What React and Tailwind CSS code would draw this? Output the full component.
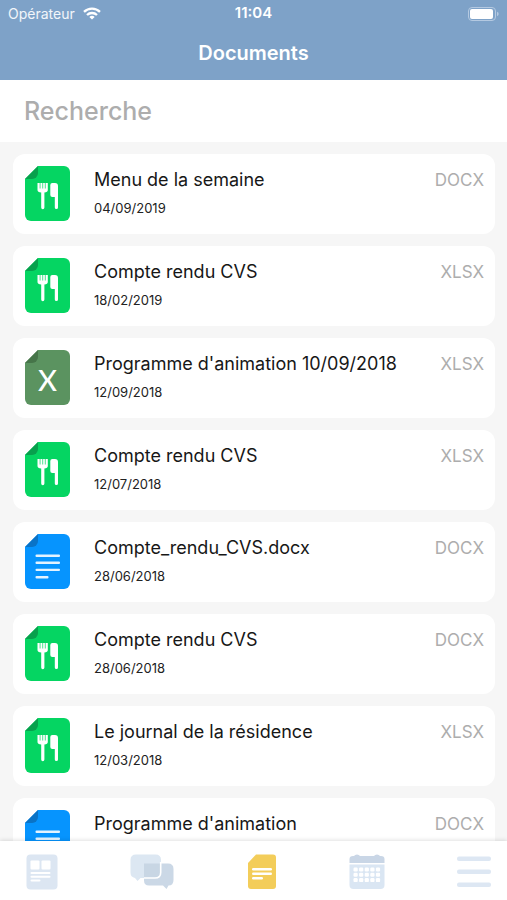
import { useState } from "react";

const documents = [
  { id: 1, title: "Menu de la semaine", date: "04/09/2019", type: "DOCX", icon: "menu" },
  { id: 2, title: "Compte rendu CVS", date: "18/02/2019", type: "XLSX", icon: "menu" },
  { id: 3, title: "Programme d'animation 10/09/2018", date: "12/09/2018", type: "XLSX", icon: "sheet" },
  { id: 4, title: "Compte rendu CVS", date: "12/07/2018", type: "XLSX", icon: "menu" },
  { id: 5, title: "Compte_rendu_CVS.docx", date: "28/06/2018", type: "DOCX", icon: "text" },
  { id: 6, title: "Compte rendu CVS", date: "28/06/2018", type: "DOCX", icon: "menu" },
  { id: 7, title: "Le journal de la résidence", date: "12/03/2018", type: "XLSX", icon: "menu" },
  { id: 8, title: "Programme d'animation", type: "DOCX", icon: "text" },
];

const iconColors = {
  menu: { page: "#05d562", fold: "#08a04d" },
  sheet: { page: "#5b9360", fold: "#467549" },
  text: { page: "#0694fe", fold: "#0a73c6" },
};

const DocumentIcon = ({ kind }) => {
  const { page, fold } = iconColors[kind];

  return (
    <svg width="45" height="55" viewBox="0 0 45 55" className="shrink-0" aria-hidden="true">
      <path d="M13 0H39a6 6 0 0 1 6 6V49a6 6 0 0 1-6 6H6a6 6 0 0 1-6-6V13Z" fill={page} />
      <path d="M13 0V7a6 6 0 0 1-6 6H0Z" fill={fold} />

      {kind === "menu" && (
        <g fill="#fff">
          {/* Fork */}
          <path d="M12.500 17H22.800V24q0 2.300-3.400 2.600V41.600a1.600 1.600 0 0 1-3.200 0V26.600q-3.700-.3-3.700-2.600Z" />
          <path d="M15.100 17v5.500M17.700 17v5.500M20.300 17v5.500" fill="none" stroke={page} strokeWidth="0.700" />
          {/* Knife */}
          <path d="M25.300 19Q25.300 17 27.300 17H30Q33 17 33 20V41.500a1.600 1.600 0 0 1-3.200 0V31h-2.500Q25.300 31 25.300 29Z" />
        </g>
      )}

      {kind === "sheet" && (
        <text x="22.500" y="41" textAnchor="middle" fontSize="29" fontWeight="500" fontFamily="Lato, sans-serif" fill="#fff">
          X
        </text>
      )}

      {kind === "text" && (
        <g fill="#e3f3ff">
          <rect x="10.500" y="20.500" width="24.500" height="2.400" rx="1" />
          <rect x="10.500" y="27.500" width="24.500" height="2.400" rx="1" />
          <rect x="10.500" y="34.700" width="24.500" height="2.400" rx="1" />
          <rect x="10.500" y="42" width="13" height="2.400" rx="1" />
        </g>
      )}
    </svg>
  );
};

const StatusBar = () => (
  <div className="flex h-[27px] items-center px-2 text-[14px] text-white">
    <div className="flex flex-1 items-center gap-2">
      <span className="text-white/90">Opérateur</span>
      <svg width="18" height="13" viewBox="0 0 18 13" fill="none" stroke="#fff" strokeWidth="2.300" aria-hidden="true">
        <path d="M1 4.800a11.500 11.500 0 0 1 16 0" />
        <path d="M4 8a7.300 7.300 0 0 1 10 0" />
        <path d="M9 12.600 6.300 9.900a4 4 0 0 1 5.400 0Z" fill="#fff" stroke="none" />
      </svg>
    </div>
    <span className="text-[15px] font-semibold">11:04</span>
    <div className="flex flex-1 justify-end">
      <svg width="31" height="14" viewBox="0 0 31 14" aria-hidden="true">
        <rect x="0.500" y="0.500" width="27" height="13" rx="3.500" fill="none" stroke="#b4c9e1" />
        <rect x="2" y="2" width="23" height="10" rx="2" fill="#fff" />
        <path d="M29 4.800q1.700.6 1.700 2.200T29 9.200Z" fill="#b4c9e1" />
      </svg>
    </div>
  </div>
);

const DocumentCard = ({ doc }) => (
  <li>
    <a href={`#document-${doc.id}`} className="flex h-20 items-start rounded-xl bg-white pt-3 pr-[11px] pl-3">
      <DocumentIcon kind={doc.icon} />
      <div className="ml-6 min-w-0 flex-1 pt-0.5">
        <div className="truncate text-[18px] leading-6 text-[#171717]">{doc.title}</div>
        {doc.date && <div className="mt-2 text-[13px] leading-4 text-[#222222]">{doc.date}</div>}
      </div>
      <span className="text-[17px] leading-7 text-[#adadad]">{doc.type}</span>
    </a>
  </li>
);

const NewsIcon = () => (
  <svg width="32" height="36" viewBox="0 0 32 36" aria-hidden="true">
    <rect x="0.500" y="0.500" width="31" height="35" rx="4" fill="#dce6f2" />
    <g fill="#fff">
      <rect x="4.500" y="6.500" width="9" height="9" rx="1" />
      <rect x="15.500" y="6.500" width="9" height="9" rx="1" />
      <rect x="4.500" y="18" width="20" height="2" rx="1" />
      <rect x="4.500" y="21.800" width="20" height="2" rx="1" />
      <rect x="4.500" y="25.500" width="10" height="2" rx="1" />
    </g>
  </svg>
);

const MessagesIcon = () => (
  <svg width="44" height="36" viewBox="0 0 44 36" aria-hidden="true">
    <path d="M19 9.500H38q5.500 0 5.500 5.500V26q0 5.500-5 5.500L36.500 35 33 31.500H19q-5 0-5-5V14.500Z" fill="#cbd8e6" />
    <path d="M6 .5H25.500Q31 .5 31 6V18.500Q31 24 25.500 24H10.500L7.500 27 5 24Q.5 23 .5 18.500V6Q.5.5 6 .5Z" fill="#dce7f2" />
    <path d="M14 9.500H31V18.500Q31 24 25.500 24H14Z" fill="#c8d6e4" />
    <path d="M30.700 8V18.500Q30.700 24 25 24H14" fill="none" stroke="#fff" strokeWidth="1.600" />
  </svg>
);

const DocumentsIcon = () => (
  <svg width="30" height="36" viewBox="0 0 30 36" aria-hidden="true">
    <path d="M9 .5H26q3 0 3 3V32q0 3-3 3H4q-3 0-3-3V9Z" fill="#f3cd5a" />
    <g fill="#fff">
      <rect x="5" y="14" width="20" height="2.400" rx="1.200" />
      <rect x="5" y="18.500" width="20" height="2.400" rx="1.200" />
      <rect x="5" y="23" width="11" height="2.400" rx="1.200" />
    </g>
  </svg>
);

const CalendarIcon = () => (
  <svg width="36" height="36" viewBox="0 0 36 36" aria-hidden="true">
    <path d="M.5 10.500H35.500V31q0 4-4 4H4.500q-4 0-4-4Z" fill="#dae6f3" />
    <path d="M.5 9V5q0-3 3.500-3H5Q6 .5 8 .5T11 2H25Q26 .5 28 .5T31 2h1q3.500 0 3.500 3V9Z" fill="#c9d6e6" />
    {[13.500, 18.800, 24.100].map((y) =>
      [4.500, 10.100, 15.700, 21.300, 26.900].map((x) => (
        <rect key={`${x}-${y}`} x={x} y={y} width="4.200" height="4" rx="1.200" fill="#fff" />
      ))
    )}
  </svg>
);

const MoreIcon = () => (
  <svg width="34" height="36" viewBox="0 0 34 36" fill="#dde7f3" aria-hidden="true">
    <rect y="2.500" width="34" height="4.500" rx="2" />
    <rect y="15.500" width="34" height="4.500" rx="2" />
    <rect y="28.500" width="34" height="4.500" rx="2" />
  </svg>
);

const tabs = [
  { label: "Actualités", Icon: NewsIcon },
  { label: "Messages", Icon: MessagesIcon },
  { label: "Documents", Icon: DocumentsIcon },
  { label: "Calendrier", Icon: CalendarIcon },
  { label: "Plus", Icon: MoreIcon },
];

const App = () => {
  const [search, setSearch] = useState("");

  const visibleDocuments = documents.filter((doc) =>
    doc.title.toLowerCase().includes(search.toLowerCase())
  );

  return (
    <div className="flex h-screen flex-col bg-[#f6f6f6] font-['Inter',sans-serif]">
      <header className="h-20 shrink-0 bg-[#7ea2c8]">
        <StatusBar />
        <h1 className="pt-3 text-center text-[20px] leading-7 font-semibold text-white">Documents</h1>
      </header>

      <div className="shrink-0 bg-white">
        <input
          type="search"
          aria-label="Recherche"
          placeholder="Recherche"
          value={search}
          onChange={(e) => setSearch(e.target.value)}
          className="block h-[62px] w-full px-6 text-[25px] font-medium text-[#222222] outline-none placeholder:text-[#adadad]"
        />
      </div>

      {/* Documents list */}
      <main className="min-h-0 flex-1 overflow-y-auto pt-3 pr-3 pl-[13px] [scrollbar-width:none]">
        <ul className="space-y-3">
          {visibleDocuments.map((doc) => (
            <DocumentCard key={doc.id} doc={doc} />
          ))}
        </ul>
      </main>

      {/* Bottom navigation */}
      <nav className="z-10 flex h-[59px] shrink-0 items-center justify-between bg-white pt-0.5 pr-4 pl-[26px] shadow-[0_-1px_4px_rgba(0,0,0,0.12)]">
        {tabs.map(({ label, Icon }) => (
          <button key={label} type="button" aria-label={label}>
            <Icon />
          </button>
        ))}
      </nav>
    </div>
  );
};

export default App;
